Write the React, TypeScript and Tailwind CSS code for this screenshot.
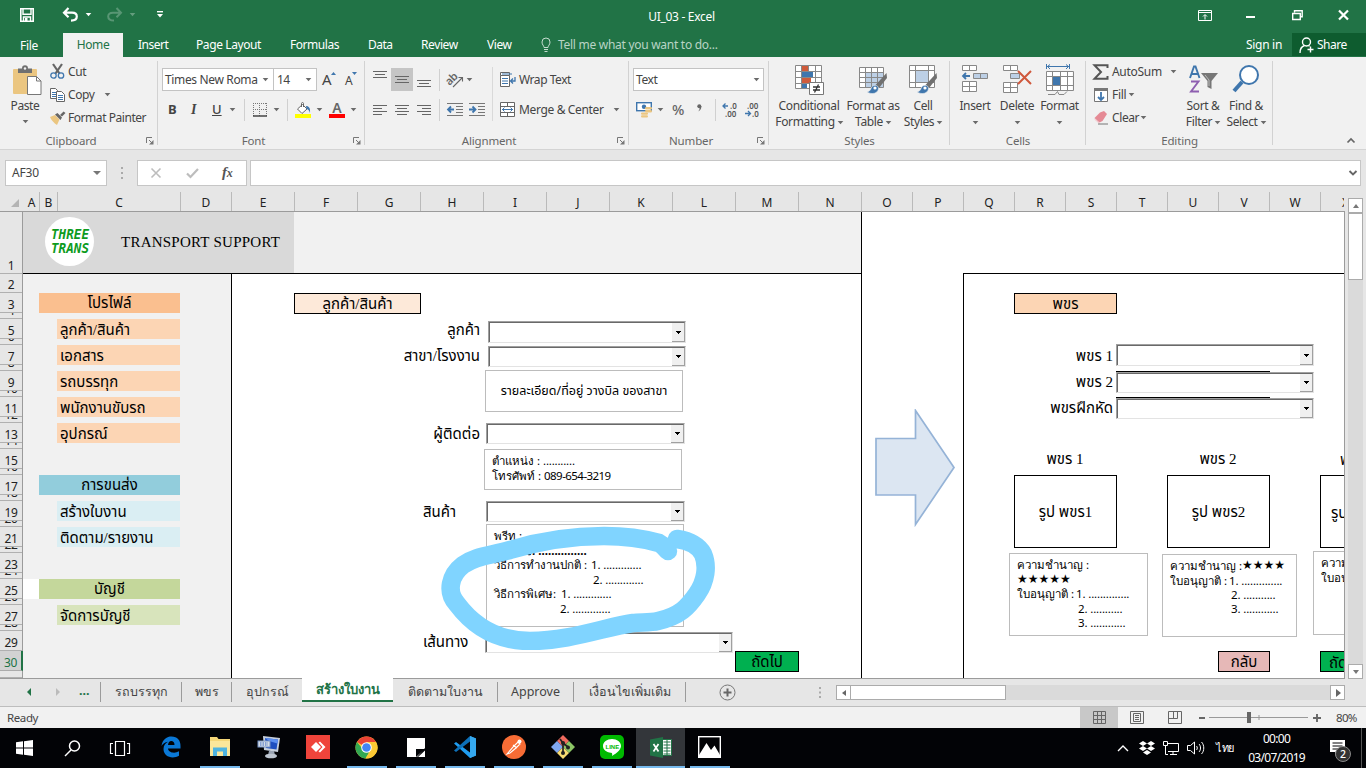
import React from "react";

const B = "#3f76ad";

function Svg({ w, h, className = "", children }: { w: number; h: number; className?: string; children: React.ReactNode }) {
  return (
    <svg width={w} height={h} viewBox={`0 0 ${w} ${h}`} fill="none" className={`block shrink-0 overflow-visible ${className}`}>
      {children}
    </svg>
  );
}

function Caret({ className = "text-[#6a6a6a]" }: { className?: string }) {
  return (
    <Svg w={5} h={3} className={className}>
      <path d="M-.3 0h5.600L2.500 3.300z" fill="currentColor" />
    </Svg>
  );
}

function Launcher() {
  return (
    <Svg w={8} h={8}>
      <path d="M.5 6V.5H6M3 3l3 3" stroke="#777" />
      <path d="M7.500 3v4.500H3z" fill="#777" />
    </Svg>
  );
}

function Lines({ rows }: { rows: [number, number, number][] }) {
  return (
    <Svg w={16} h={14}>
      {rows.map(([x, y, w], i) => (
        <rect key={i} x={x} y={y} width={w} height={1} fill="#666" />
      ))}
    </Svg>
  );
}

/* ---------- title bar ---------- */

function TitleBar() {
  return (
    <div className="relative flex h-[33px] items-center text-white">
      <div className="flex w-[236px] items-center">
        <Svg w={14} h={14} className="ml-5 mb-1">
          <path d="M.8.8h12.400v12.400H.8z" stroke="#fff" strokeWidth="1.600" />
          <path d="M3 1v5.300h8V1M3.500 13V9h7v4" stroke="#fff" strokeWidth="1.400" />
          <rect x="5" y="10" width="2.500" height="3" fill="#fff" />
        </Svg>
        <Svg w={15} h={14} className="ml-[29px] mb-1">
          <path d="M5.500 0L1 4.700l4.500 4.500M1.500 4.700h7.500c3.300 0 4.800 1.500 4.800 3.800S12 12.600 8 12.600" stroke="#fff" strokeWidth="2.200" />
        </Svg>
        <Caret className="ml-[8px] mb-1 text-white" />
        <Svg w={15} h={14} className="ml-4 mb-1 opacity-25">
          <path d="M9.500 0L14 4.700 9.500 9.200M13.500 4.700H6C2.700 4.700 1.200 6.200 1.200 8.500s1.800 4.100 5.800 4.100" stroke="#fff" strokeWidth="2" />
        </Svg>
        <Caret className="ml-[8px] mb-1 text-white/30" />
        <Svg w={6} h={7} className="ml-[22px] mb-1">
          <path d="M0 .7h6" stroke="#fff" strokeWidth="1.400" />
          <path d="M0 3h6L3 6.500z" fill="#fff" />
        </Svg>
      </div>
      <div className="flex-1 pr-[73px] text-center text-[12px] tracking-[-0.3px]"><span className="pl-[2px]">UI_03 - Excel</span></div>
      <div className="mr-[17px] mb-[3px] flex items-center">
        <Svg w={14} h={11}>
          <path d="M.5.500h13v10H.5zM.5 2.500h13M7 9.500V5M5 6.500l2-2 2 2" stroke="#fff" />
        </Svg>
        <Svg w={9} h={2} className="mt-1 ml-[34px]"><rect width="9" height="2" fill="#fff" /></Svg>
        <Svg w={11} h={10} className="ml-[37px]">
          <path d="M2.500 2.500V.7h7.700v6H8.500M.7 3.500h7.600v6H.7z" stroke="#fff" strokeWidth="1.400" />
        </Svg>
        <Svg w={11} h={10} className="ml-[35px]"><path d="M1 .5l9 9M10 .5l-9 9" stroke="#fff" strokeWidth="2.200" /></Svg>
      </div>
    </div>
  );
}

function RibbonTabs() {
  return (
    <div className="flex h-6 text-[12px] leading-6 text-white">
      <div className="w-[63px] pl-5 pt-px tracking-[-0.3px]">File</div>
      <div className="w-[60px] bg-[#f1f1f1] text-center tracking-[-0.4px] text-[#217346]">Home</div>
      <div className="w-[58px] pl-[15px] tracking-[-0.5px]">Insert</div>
      <div className="w-[94px] pl-[15px] tracking-[-0.4px]">Page Layout</div>
      <div className="w-[78px] pl-[15px] tracking-[-0.45px]">Formulas</div>
      <div className="w-[53px] pl-[15px] tracking-[-0.5px]">Data</div>
      <div className="w-[66px] pl-[15px] tracking-[-0.4px]">Review</div>
      <div className="w-[54px] pl-[15px] tracking-[-0.4px]">View</div>
      <Svg w={10} h={15} className="ml-[15px] mt-1">
        <path d="M3 10.500c0-2-2-2.500-2-5.500a4 4 0 018 0c0 3-2 3.500-2 5.500zM3 12.500h4M3.500 14.500h3" stroke="#c5dccf" />
      </Svg>
      <div className="pl-[7px] tracking-[-0.28px] text-[#b9d4c5]">Tell me what you want to do...</div>
      <div className="flex-1" />
      <div className="w-[46px] tracking-[-0.3px]">Sign in</div>
      <div className="flex h-[23px] w-[74px] items-center bg-[#0e5c2f] pl-[7px]">
        <Svg w={16} h={16}>
          <circle cx="7.500" cy="5" r="4" stroke="#fff" strokeWidth="1.400" />
          <path d="M1 16c0-4 1.500-6.500 4.500-7.500M9.500 8.500l1 .7M11.500 9.500v6M8.500 12.500h6" stroke="#fff" strokeWidth="1.400" />
        </Svg>
        <span className="ml-[2px] tracking-[-0.5px]">Share</span>
      </div>
    </div>
  );
}

/* ---------- ribbon ---------- */

function Group({ w, label, launcher, children }: { w: string; label: string; launcher?: boolean; children: React.ReactNode }) {
  return (
    <div className={`relative flex flex-col ${w}`}>
      <div className="h-[75px]">{children}</div>
      <div className="flex h-[17px] items-center text-[11.5px] leading-none text-[#666]">
        <div className="flex-1 text-center tracking-[-0.15px]">{label}</div>
        {launcher && <div className="w-[16px] pl-1 pt-px"><Launcher /></div>}
      </div>
      <div className="absolute right-0 top-1 h-[84px] w-px bg-[#d2d2d2]" />
    </div>
  );
}

function PasteIcon() {
  return (
    <Svg w={29} h={31}>
      <rect x="0" y="4" width="24" height="25" rx="1" fill="#ebc681" />
      <path d="M5 8V3.500h4C9 1 10 .3 12 .3S15 1 15 3.500h4V8z" fill="#707070" />
      <circle cx="12" cy="3.500" r="1.200" fill="#f1f1f1" />
      <path d="M14.500 11.500h9l4.500 4.500v13.500H14.500z" fill="#fff" stroke="#777" />
      <path d="M23.500 11.500V16H28" stroke="#777" />
    </Svg>
  );
}

function Clipboard() {
  return (
    <Group w="w-[158px]" label="Clipboard" launcher>
      <div className="flex text-[12px] text-[#444]">
        <div className="flex w-[50px] flex-col items-center pt-[8px]">
          <div className="pl-1"><PasteIcon /></div>
          <div className="mt-[2px] leading-4 tracking-[-0.4px]">Paste</div>
          <div className="mt-[6px]"><Caret /></div>
        </div>
        <div className="flex flex-col pt-[3px] tracking-[-0.4px]">
          <div className="flex h-[23px] items-center">
            <Svg w={15} h={15}>
              <path d="M3 0l6.500 9.500M12 0L5.500 9.500" stroke="#666" strokeWidth="2.200" />
              <circle cx="3.500" cy="11.500" r="2.700" stroke={B} strokeWidth="1.300" />
              <circle cx="11" cy="11.500" r="2.700" stroke={B} strokeWidth="1.300" />
            </Svg>
            <span className="ml-[3px]">Cut</span>
          </div>
          <div className="flex h-[23px] items-center">
            <Svg w={15} h={14}>
              <path d="M.5.500h5l2 2v8h-7z" fill="#fff" stroke="#666" />
              <path d="M2 4.500h4M2 6.500h4M2 8.500h4" stroke={B} />
              <path d="M6.500 3.500h5l3 3v7h-8z" fill="#fff" stroke="#666" />
              <path d="M8 7.500h5M8 9.500h5M8 11.500h5" stroke={B} />
            </Svg>
            <span className="ml-[3px]">Copy</span>
            <div className="ml-[10px]"><Caret /></div>
          </div>
          <div className="flex h-[23px] items-center">
            <Svg w={16} h={14}>
              <path d="M0 6l5-2 4.500 4.500L7 14C4 12 1.500 9.500 0 6z" fill="#ebc681" />
              <path d="M5 3.500L7.500 2 12 6.500 10.500 9zM10 4l3.500-3.500L15.500 2 12 5.500z" fill="#666" />
            </Svg>
            <span className="ml-[2px] whitespace-nowrap tracking-[-0.45px]">Format Painter</span>
          </div>
        </div>
      </div>
    </Group>
  );
}

function FontGroup() {
  return (
    <Group w="w-[207px]" label="Font" launcher>
      <div className="flex flex-col pt-[11px] pl-1 text-[#444]">
        <div className="flex h-[23px] items-stretch text-[12px]">
          <div className="flex w-[112px] items-center justify-between border border-[#c3c3c3] bg-white pl-[2px] pr-[5px]">
            <span className="whitespace-nowrap tracking-[-0.35px]">Times New Roma</span><Caret />
          </div>
          <div className="-ml-px flex w-[44px] items-center justify-between border border-[#c3c3c3] bg-white pl-[3px] pr-[5px]">
            <span className="tracking-[-0.7px]">14</span><Caret />
          </div>
          <div className="ml-[5px] flex w-[15px] items-center text-[15px]">A<Svg w={5} h={3} className="-ml-px mb-3"><path d="M2.500 0L5 3H0z" fill={B} /></Svg></div>
          <div className="ml-2 flex items-center text-[12px]"><span className="pt-[2px]">A</span><Svg w={5} h={3} className="-ml-px mb-3"><path d="M2.500 3L5 0H0z" fill={B} /></Svg></div>
        </div>
        <div className="mt-[7px] flex h-[23px] items-center text-[13px]">
          <span className="w-[22px] pl-[6px] font-bold">B</span>
          <span className="w-[22px] pl-[7px] font-['Liberation_Serif'] text-[14px] italic font-bold">I</span>
          <span className="w-[24px] pl-[6px] font-medium underline">U</span>
          <Caret />
          <div className="ml-[9px] h-[22px] w-px bg-[#d0d0d0]" />
          <Svg w={14} h={14} className="ml-2">
            <path d="M.5 0v13M13.500 0v13M6.500 0v13M0 .5h14M0 6.500h14" stroke="#777" strokeDasharray="1 1" />
            <path d="M0 13h14" stroke="#444" strokeWidth="1.500" />
          </Svg>
          <div className="ml-[7px]"><Caret /></div>
          <div className="ml-2 h-[22px] w-px bg-[#d0d0d0]" />
          <Svg w={17} h={16} className="ml-[7px]">
            <path d="M2.500 7l5-4.500L12 7l-5 4.500zM6.500 5V1.500c0-1.300 2-1.300 2 0V5" stroke="#666" fill="#fff" />
            <path d="M11 4c3 0 4.500 2 4 7-1-3-2-4-3.500-4z" fill={B} />
            <rect y="12" width="16" height="4" fill="#ffff00" />
          </Svg>
          <div className="ml-[5px]"><Caret /></div>
          <div className="ml-[7px] flex w-4 flex-col items-center">
            <span className="h-[13px] text-[14px] leading-[13px] font-semibold text-[#666]">A</span>
            <span className="h-[4px] w-4 bg-[#ff0000]" />
          </div>
          <div className="ml-[6px]"><Caret /></div>
        </div>
      </div>
    </Group>
  );
}

function IndentIcon({ right }: { right?: boolean }) {
  return (
    <Svg w={16} h={14}>
      <path d="M0 .5h16M9 3.500h7M9 6.500h7M9 9.500h7M0 12.500h16" stroke="#777" />
      <path d={right ? "M0 6.500h6M3.500 3.500l3 3-3 3" : "M1 6.500h6M4 3.500l-3 3 3 3"} stroke={B} strokeWidth="1.800" />
    </Svg>
  );
}

function Alignment() {
  return (
    <Group w="w-[264px]" label="Alignment" launcher>
      <div className="flex pt-[10px]">
        <div className="flex w-[128px] flex-col border-r border-[#d9d9d9] pl-[3px] pt-px">
          <div className="flex h-[23px] items-center">
            <div className="w-[22px] pl-[5px] pb-[6px]"><Lines rows={[[0, 1, 14], [2, 4, 10], [0, 7, 14]]} /></div>
            <div className="ml-[1px] flex h-[23px] w-[22px] items-center justify-center bg-[#c5c5c5]"><Lines rows={[[1, 3, 14], [3, 6, 10], [1, 9, 14]]} /></div>
            <div className="ml-[4px] pt-1"><Lines rows={[[0, 5, 14], [2, 8, 10], [0, 11, 14]]} /></div>
            <div className="ml-[6px] h-[22px] w-px bg-[#d0d0d0]" />
            <Svg w={17} h={16} className="ml-[7px]">
              <text x="0" y="10" transform="rotate(-45 6 9)" fontSize="11" fontFamily="Noto Sans" fontWeight="600" letterSpacing="-.5" fill="#666">ab</text>
              <path d="M6 15l9-9M11.500 5.500h4v4" stroke="#666" strokeWidth="1.100" />
            </Svg>
            <div className="ml-[3px]"><Caret /></div>
          </div>
          <div className="mt-[7px] flex h-[23px] items-center">
            <div className="w-[22px] pl-[5px]"><Lines rows={[[0, 2, 14], [0, 5, 9], [0, 8, 14], [0, 11, 9]]} /></div>
            <div className="w-[22px] pl-[5px]"><Lines rows={[[0, 2, 14], [2, 5, 10], [0, 8, 14], [2, 11, 10]]} /></div>
            <div className="w-[22px] pl-[5px]"><Lines rows={[[0, 2, 14], [5, 5, 9], [0, 8, 14], [5, 11, 9]]} /></div>
            <div className="ml-[5px] h-[22px] w-px bg-[#d0d0d0]" />
            <div className="ml-[7px]"><IndentIcon /></div>
            <div className="ml-[6px]"><IndentIcon right /></div>
          </div>
        </div>
        <div className="flex flex-col pl-[7px] pt-px text-[12px] text-[#444]">
          <div className="flex h-[23px] items-center">
            <Svg w={16} h={16}>
              <path d="M.5.500h9v3h-9zM.5 3.500v11h9v-11" stroke="#666" fill="#fff" />
              <path d="M2 2h10M2 6.500h6M2 9h6M2 11.500h6" stroke={B} />
              <path d="M15 5v4h-4M13 6.500L10.500 9l2.500 2.500" stroke={B} strokeWidth="1.300" />
            </Svg>
            <span className="ml-[3px] tracking-[-0.45px]">Wrap Text</span>
          </div>
          <div className="mt-[7px] flex h-[23px] items-center">
            <Svg w={16} h={15}>
              <path d="M.5.500h14v14H.5zM.5 4.500h14M.5 10.500h14M7.500.5v4M7.500 10.500v4" stroke="#666" fill="#fff" />
              <path d="M2 7.500h11M4.500 5.500l-2 2 2 2M10.500 5.500l2 2-2 2" stroke={B} />
            </Svg>
            <span className="ml-[3px] whitespace-nowrap tracking-[-0.35px]">Merge &amp; Center</span>
            <div className="ml-[10px]"><Caret /></div>
          </div>
        </div>
      </div>
    </Group>
  );
}

function NumberGroup() {
  return (
    <Group w="w-[140px]" label="Number" launcher>
      <div className="flex flex-col pl-1 pt-[11px] text-[12px] text-[#444]">
        <div className="flex h-[23px] w-[131px] items-center justify-between border border-[#c3c3c3] bg-white pl-[2px] pr-[4px]">
          <span className="tracking-[-0.4px]">Text</span><Caret />
        </div>
        <div className="mt-[7px] flex h-[23px] items-center">
          <Svg w={17} h={16} className="ml-[3px]">
            <rect x=".7" y=".7" width="14.600" height="8" fill="#fff" stroke={B} strokeWidth="1.400" />
            <circle cx="8" cy="4.700" r="2.200" fill={B} />
            <rect x="9" y="5" width="7" height="2.500" rx="1.200" fill="#ebc681" />
            <rect x="9" y="8" width="7" height="2.500" rx="1.200" fill="#ebc681" />
            <rect x="5" y="10.500" width="7" height="2.300" rx="1.100" fill="#ebc681" />
            <rect x="5" y="13.300" width="7" height="2.300" rx="1.100" fill="#ebc681" />
          </Svg>
          <div className="ml-[5px]"><Caret /></div>
          <span className="ml-[9px] w-[14px] text-[14.5px] font-medium text-[#666]">%</span>
          <Svg w={5} h={8} className="ml-[11px] mb-1">
            <circle cx="2.300" cy="2.300" r="2" fill="#666" /><path d="M4.300 2c.3 2.500-.8 4.500-3.300 5.500C2.500 6 2.800 5 2.500 3z" fill="#666" />
          </Svg>
          <div className="ml-[13px] h-[22px] w-px bg-[#d0d0d0]" />
          <Svg w={15} h={15} className="ml-[7px]">
            <path d="M0 4h5M2.500 1.500L0 4l2.500 2.500" stroke={B} strokeWidth="1.300" />
            <text x="7" y="7" fontSize="8" fontFamily="Noto Sans" fontWeight="600" fill="#555">.0</text>
            <text x="2" y="14.500" fontSize="8" fontFamily="Noto Sans" fontWeight="600" fill="#555">.00</text>
          </Svg>
          <Svg w={15} h={15} className="ml-[7px]">
            <path d="M0 11.500h5M3 9l2.500 2.500L3 14" stroke={B} strokeWidth="1.300" />
            <text x="2" y="7" fontSize="8" fontFamily="Noto Sans" fontWeight="600" fill="#555">.00</text>
            <text x="7" y="14.500" fontSize="8" fontFamily="Noto Sans" fontWeight="600" fill="#555">.0</text>
          </Svg>
        </div>
      </div>
    </Group>
  );
}

function Big({ w, icon, a, b, ml = "" }: { w: string; icon: React.ReactNode; a: string; b?: string; ml?: string }) {
  return (
    <div className={`flex flex-col items-center pt-[7px] text-[12px] leading-4 text-[#444] ${w} ${ml}`}>
      <div className="flex h-[32px] items-start">{icon}</div>
      <div className="mt-[2px] whitespace-nowrap tracking-[-0.35px]">{a}</div>
      <div className="flex h-4 items-center gap-[3px] tracking-[-0.35px]">{b && <span>{b}</span>}<Caret /></div>
    </div>
  );
}

function Brush() {
  return (
    <>
      <path d="M28.500 9L17.500 21l3.500 3L29 14z" fill="#707070" />
      <path d="M20.500 24.500c0-4-6-4.500-7.500 0-.5 2-2 3-4 3.500 5 3 11 1.500 11.500-3.500z" fill={B} stroke="#f1f1f1" strokeWidth=".6" />
      <circle cx="17" cy="24" r="1.600" fill="#fff" />
    </>
  );
}

function Styles() {
  return (
    <Group w="w-[181px]" label="Styles">
      <div className="flex">
        <Big w="w-[74px]" ml="ml-[3px]" a="Conditional" b="Formatting" icon={
          <Svg w={31} h={32}>
            <path d="M1.500 1.500h26v23h-26z" fill="#fff" />
            <rect x="8" y="1" width="6" height="7" fill="#cf5b3b" /><rect x="8" y="8" width="11" height="6" fill={B} />
            <rect x="8" y="14" width="9" height="5" fill="#cf5b3b" /><rect x="8" y="19" width="5" height="6" fill={B} />
            <path d="M1.500 1.500h26v23h-26zM7.500 1v24M21.500 1v24M14.500 1v7M1 7.500h27M1 13.500h27M1 19.500h27" stroke="#888" />
            <path d="M15.500 18.500h14v12h-14z" fill="#fff" stroke="#777" />
            <path d="M19 23h7M19 26h7M24.500 20.500l-4 8" stroke="#333" strokeWidth="1.300" />
          </Svg>} />
        <Big w="w-[54px]" a="Format as" b="Table" icon={
          <Svg w={30} h={32}>
            <path d="M1.500 3.500h24v20h-24z" fill="#fff" /><path d="M8 8h17v15H8z" fill="#bdd0e6" />
            <path d="M1.500 3.500h24v20h-24zM7.500 3v20M13.500 3v20M19.500 3v20M1 8.500h24M1 13.500h24M1 18.500h24" stroke="#888" />
            <Brush />
          </Svg>} />
        <Big w="w-[46px]" a="Cell" b="Styles" icon={
          <Svg w={30} h={32}>
            <path d="M1.500 1.500h25v22h-25z" fill="#fff" /><path d="M8 7h13v11H8z" fill="#bdd0e6" />
            <path d="M1.500 1.500h25v22h-25zM7.500 1v22M20.500 1v22M1 6.500h25M1 18.500h25" stroke="#888" />
            <Brush />
          </Svg>} />
      </div>
    </Group>
  );
}

function Cells() {
  return (
    <Group w="w-[136px]" label="Cells">
      <div className="flex">
        <Big w="w-[42px]" ml="ml-[4px]" a="Insert" icon={
          <Svg w={28} h={32}>
            <path d="M1.500 1.500h14v5h-14zM8.500 1.500v5M1.500 17.500h14v10h-14zM1.500 22.500h14M8.500 17.500v10" fill="#fff" stroke="#888" />
            <path d="M12.500 9.500h14v5h-14zM19.500 9.500v5" fill="#bdd0e6" stroke="#888" />
            <path d="M2 12h7M5 9l-3 3 3 3" stroke={B} strokeWidth="1.800" />
          </Svg>} />
        <Big w="w-[42px]" a="Delete" icon={
          <Svg w={30} h={32}>
            <path d="M1.500 1.500h14v5h-14zM8.500 1.500v5M1.500 18.500h14v10h-14zM1.500 23.500h14M8.500 18.500v10" fill="#fff" stroke="#888" />
            <path d="M8.500 9.500h9v5h-9z" fill="#bdd0e6" stroke="#888" />
            <path d="M16 7l13 13M29 7L16 20" stroke="#d0583c" strokeWidth="2" />
          </Svg>} />
        <Big w="w-[43px]" a="Format" icon={
          <Svg w={30} h={32}>
            <path d="M1.500 0v5M24.500 0v5M2 2.500h22M5 .5l-2.500 2L5 5M21 .5l2.500 2L21 5" stroke={B} />
            <path d="M1.500 7.500h26v19h-26z" fill="#fff" /><rect x="8" y="12" width="8" height="10" fill={B} />
            <path d="M1.500 7.500h27v19h-27zM7.500 7v19M15.500 7v19M22.500 7v19M1 12.500h27M1 21.500h27M3 30.500h7l2.500-3 1.500 3h5l3-3" stroke="#888" />
          </Svg>} />
      </div>
    </Group>
  );
}

function Editing() {
  return (
    <Group w="w-[187px]" label="Editing">
      <div className="flex">
        <div className="ml-[7px] flex w-[88px] flex-col pt-[3px] text-[12px] tracking-[-0.3px] text-[#444]">
          <div className="flex h-[23px] items-center">
            <Svg w={16} h={16}><path d="M14.500 4V1.200H1.500L8 8l-6.500 6.800h13V12" stroke="#555" strokeWidth="2" /></Svg>
            <span className="ml-[3px]">AutoSum</span><div className="ml-[9px]"><Caret /></div>
          </div>
          <div className="flex h-[23px] items-center">
            <Svg w={16} h={16}>
              <path d="M1.500 1.500h13v13h-13z" fill="#fff" stroke="#777" /><rect x="1" y="1" width="14" height="3" fill="#777" />
              <path d="M8 5v8M5 10l3 3 3-3" stroke={B} strokeWidth="1.800" />
            </Svg>
            <span className="ml-[3px]">Fill</span><div className="ml-[3px]"><Caret /></div>
          </div>
          <div className="flex h-[23px] items-center">
            <Svg w={16} h={14}>
              <path d="M7 1.500l4-1.500 3 3-4.500 7-3 1.500-5-4.500z" fill="#e58a95" /><path d="M1.500 8l5 4.500" stroke="#f5c1c7" /><path d="M5 13h10" stroke="#777" />
            </Svg>
            <span className="ml-[3px] tracking-[-0.4px]">Clear</span><div className="ml-[2px]"><Caret /></div>
          </div>
        </div>
        <Big w="w-[44px]" a="Sort &" b="Filter" icon={
          <Svg w={30} h={32}>
            <path d="M2 14L6 2.500h1.500L11.500 14M3.500 10h6.500" stroke={B} strokeWidth="1.900" />
            <path d="M3 17.500h7.500L3 27.500h8" stroke="#8e5fb0" strokeWidth="1.900" />
            <path d="M13 9h17l-6.500 8v8l-4-2v-6z" fill="#777" />
            <path d="M17 11l4 5v6" stroke="#bbb" />
          </Svg>} />
        <Big w="w-[42px]" a="Find &" b="Select" icon={
          <Svg w={30} h={32}>
            <circle cx="18" cy="11" r="9" fill="#fff" stroke={B} strokeWidth="2" />
            <path d="M11 18L3 27" stroke={B} strokeWidth="4" />
          </Svg>} />
      </div>
    </Group>
  );
}

function Ribbon() {
  return (
    <div className="flex h-[93px] border-b border-[#d4d4d4] bg-[#f1f1f1]">
      <Clipboard />
      <FontGroup />
      <Alignment />
      <NumberGroup />
      <Styles />
      <Cells />
      <Editing />
      <div className="flex flex-1 items-end justify-end pb-[6px] pr-[11px]">
        <Svg w={8} h={5}><path d="M.5 4.500L4 1l3.500 3.500" stroke="#666" strokeWidth="1.700" /></Svg>
      </div>
    </div>
  );
}

function FormulaBar() {
  return (
    <div className="flex h-[42px] items-start bg-[#e6e6e6] pt-[10px]">
      <div className="ml-[5px] flex h-[26px] w-[102px] items-center justify-between border border-[#c6c6c6] bg-white pl-[6px] pr-[5px] text-[12px] text-[#444]">
        <span className="tracking-[-0.2px]">AF30</span>
        <Svg w={8} h={4}><path d="M0 0h8L4 4z" fill="#777" /></Svg>
      </div>
      <Svg w={2} h={12} className="ml-[14px] mt-[7px]"><path d="M1 0v2M1 5v2M1 10v2" stroke="#aaa" strokeWidth="2" /></Svg>
      <div className="ml-[14px] flex h-[26px] w-[110px] items-center border border-[#c6c6c6] bg-white">
        <Svg w={10} h={10} className="ml-[13px]"><path d="M.5.500l9 9M9.500.5l-9 9" stroke="#bdbdbd" strokeWidth="1.600" /></Svg>
        <Svg w={13} h={10} className="ml-[25px]"><path d="M1 5.500L4.500 9 12 1" stroke="#bdbdbd" strokeWidth="2.200" /></Svg>
        <span className="ml-[23px] pb-[2px] font-['Liberation_Serif'] text-[15px] font-bold italic tracking-[-0.3px] text-[#555]">f<span className="text-[12px]">x</span></span>
      </div>
      <div className="ml-[3px] flex h-[26px] w-[1111px] items-center justify-end border border-[#c6c6c6] bg-white pr-[3px]">
        <Svg w={8} h={6}><path d="M.5 1L4 4.500 7.500 1" stroke="#666" strokeWidth="1.900" /></Svg>
      </div>
    </div>
  );
}

/* ---------- worksheet ---------- */

const columns = "ABCDEFGHIJKLMNOPQRSTUVWX".split("");

function ColumnHeaders() {
  return (
    <div className="flex h-5 border-b border-[#9b9b9b] bg-[#e6e6e6]">
      <div className="flex w-[24px] items-end justify-end pb-1 pr-[5px]">
        <Svg w={8} h={8}><path d="M8 0v8H0z" fill="#b4b4b4" /></Svg>
      </div>
      <div className="grid w-[1320px] grid-cols-[16px_18px_123px_51px_repeat(10,63px)_repeat(9,51px)_23px] overflow-hidden text-center text-[12px] leading-[22px] text-[#222]">
        {columns.map((c, i) => (
          <div key={c} className={i === 23 ? "overflow-hidden pl-[21px] text-left" : "border-r border-[#bababa]"}>{c}</div>
        ))}
      </div>
    </div>
  );
}

const rows = Array.from({ length: 31 }, (_, i) => i + 1);

function RowHeaders() {
  return (
    <div className="grid w-[23px] shrink-0 grid-rows-[62px_19px_20px_repeat(13,6px_20px)_20px_7px] border-r border-[#9b9b9b] bg-[#e6e6e6] text-center text-[12px] tracking-[-0.4px] text-[#222]">
      {rows.map((n) => (
        <div key={n} className={`flex items-end justify-center overflow-hidden border-b ${n === 30 ? "-mr-px border-b-[#ababab] border-r-2 border-r-[#217346] bg-[#d2d2d2] text-[#217346]" : "border-[#b0b0b0]"}`}>
          {n < 31 && <span className="h-[15px] leading-[15px]">{n}</span>}
        </div>
      ))}
    </div>
  );
}

function Label({ at, children }: { at: string; children: React.ReactNode }) {
  return (
    <div className={`flex items-center whitespace-nowrap ${at}`}>
      <span className={at.includes("justify-center") ? "" : "mt-[2px]"}>{children}</span>
    </div>
  );
}

function Combo({ at }: { at: string }) {
  return (
    <div className={`absolute flex justify-end border border-b-[#e3e3e3] border-l-[#a0a0a0] border-r-[#e3e3e3] border-t-[#a0a0a0] bg-white ${at}`}>
      <div className="flex-1 border-l border-t border-[#696969]" />
      <div className="flex w-[13px] items-center justify-center border-b border-r border-t border-b-[#a0a0a0] border-r-[#a0a0a0] border-t-[#696969] bg-[#f0f0f0]">
        <Svg w={5} h={3}><path d="M0 0h5v1H4v1H3v1H2V2H1V1H0z" fill="#000" /></Svg>
      </div>
    </div>
  );
}

function TextBox({ at, children }: { at: string; children: React.ReactNode }) {
  return <div className={`absolute border border-[#bcbcbc] bg-white leading-[15px] whitespace-pre ${at}`}>{children}</div>;
}

function Logo() {
  return (
    <div className="ml-[6px] flex h-[49px] w-[49px] flex-col items-center justify-center rounded-full bg-white">
      <svg width="42" height="32" viewBox="0 0 42 32" className="block">
        <g fill="#0d9b1e" fontFamily="DejaVu Sans Mono" fontWeight="bold" fontStyle="oblique" fontSize="14.500">
          <text x="2" y="13" textLength="38" lengthAdjust="spacingAndGlyphs">THREE</text>
          <text x="2" y="27" textLength="38" lengthAdjust="spacingAndGlyphs">TRANS</text>
        </g>
      </svg>
    </div>
  );
}

function Sheet() {
  return (
    <div className="relative grid h-[466px] w-[1321px] grid-cols-[16px_18px_123px_51px_repeat(10,63px)_repeat(9,51px)_24px] grid-rows-[62px_19px_20px_repeat(13,6px_20px)_20px_7px] overflow-hidden bg-white font-['Liberation_Serif','Noto_Sans_Thai','Noto_Sans',serif] text-[15px] leading-[20px] text-black">
      <div className="col-start-1 col-end-6 row-start-1 flex items-center border-b border-black bg-[#d9d9d9]">
        <div className="w-[98px] pb-[2px] pl-4"><Logo /></div>
        <span className="whitespace-nowrap pb-px text-[15px] tracking-[0.24px]">TRANSPORT SUPPORT</span>
      </div>
      <div className="col-start-6 col-end-15 row-start-1 border-b border-black bg-[#f1f1f1]" />
      <div className="col-start-1 col-end-5 row-start-2 row-end-32 bg-[#f1f1f1]" />
      <div className="col-start-5 col-end-15 row-start-2 row-end-32 border-l border-black" />
      <div className="col-start-15 col-end-17 row-start-1 row-end-32 border-l border-black" />
      <div className="col-start-17 col-end-25 row-start-2 row-end-32 -mt-px border-l border-t border-black" />
      <div className="col-start-1 row-start-25 bg-white" />

      <Label at="col-start-2 col-end-4 row-start-3 bg-[#fabf8f] justify-center">โปรไฟล์</Label>
      <Label at="col-start-3 row-start-5 bg-[#fcd5b4] pl-[3px]">ลูกค้า/สินค้า</Label>
      <Label at="col-start-3 row-start-7 bg-[#fcd5b4] pl-[3px]">เอกสาร</Label>
      <Label at="col-start-3 row-start-9 bg-[#fcd5b4] pl-[3px]">รถบรรทุก</Label>
      <Label at="col-start-3 row-start-11 bg-[#fcd5b4] pl-[3px]">พนักงานขับรถ</Label>
      <Label at="col-start-3 row-start-13 bg-[#fcd5b4] pl-[3px]">อุปกรณ์</Label>
      <Label at="col-start-2 col-end-4 row-start-17 bg-[#92cddc] justify-center">การขนส่ง</Label>
      <Label at="col-start-3 row-start-19 bg-[#daeef3] pl-[3px]">สร้างใบงาน</Label>
      <Label at="col-start-3 row-start-21 bg-[#daeef3] pl-[3px]">ติดตาม/รายงาน</Label>
      <Label at="col-start-2 col-end-4 row-start-25 bg-[#c4d79b] justify-center">บัญชี</Label>
      <Label at="col-start-3 row-start-27 bg-[#d8e4bc] pl-[3px]">จัดการบัญชี</Label>

      <Label at="col-start-6 col-end-8 row-start-3 -mr-px -mb-px border border-black bg-[#fde9d9] justify-center">ลูกค้า/สินค้า</Label>
      <Label at="col-start-8 row-start-5 justify-end pr-[3px]">ลูกค้า</Label>
      <Label at="col-start-7 col-end-9 row-start-7 justify-end pr-[3px]">สาขา/โรงงาน</Label>
      <Label at="col-start-8 row-start-13 justify-end pr-[3px]">ผู้ติดต่อ</Label>
      <Label at="col-start-8 row-start-19 pl-[3px]">สินค้า</Label>
      <Label at="col-start-8 row-start-29 pl-[3px]">เส้นทาง</Label>
      <Label at="col-start-13 row-start-30 -mr-px -mb-px border border-black bg-[#00b050] justify-center">ถัดไป</Label>

      <Label at="col-start-18 col-end-20 row-start-3 -mr-px -mb-px border border-black bg-[#fcd5b4] justify-center">พขร</Label>
      <Label at="col-start-18 col-end-20 row-start-7 justify-end pr-[3px]">พขร 1</Label>
      <Label at="col-start-18 col-end-20 row-start-9 justify-end pr-[3px]">พขร 2</Label>
      <Label at="col-start-18 col-end-20 row-start-11 justify-end pr-[3px]">พขรฝึกหัด</Label>
      <div className="col-start-20 col-end-23 row-start-9 row-end-11 -mr-px -mb-px border-y border-black" />
      <Label at="col-start-18 col-end-20 row-start-15 justify-center">พขร 1</Label>
      <Label at="col-start-21 col-end-23 row-start-15 justify-center">พขร 2</Label>
      <Label at="col-start-24 row-start-15 pl-[20px]">พขร 3</Label>
      <Label at="col-start-18 col-end-20 row-start-17 row-end-22 -mr-px mb-[-1px] border border-black justify-center">รูป พขร1</Label>
      <Label at="col-start-21 col-end-23 row-start-17 row-end-22 -mr-px mb-[-1px] border border-black justify-center">รูป พขร2</Label>
      <Label at="col-start-24 row-start-17 row-end-22 -mr-20 mb-[-1px] border border-black pl-[10px]">รูป พขร3</Label>
      <Label at="col-start-22 row-start-30 -mr-px -mb-px border border-black bg-[#e6b8b7] justify-center">กลับ</Label>
      <Label at="col-start-24 row-start-30 -mr-20 -mb-px border border-black bg-[#00b050] pl-[8px]">ถัดไป</Label>

      {/* form controls and shapes floating above the cells */}
      <Combo at="left-[465px] top-[109px] h-[22px] w-[198px]" />
      <Combo at="left-[465px] top-[134px] h-[21px] w-[198px]" />
      <Combo at="left-[463px] top-[211px] h-[21px] w-[199px]" />
      <Combo at="left-[463px] top-[289px] h-[21px] w-[199px]" />
      <Combo at="left-[462px] top-[420px] h-[21px] w-[248px]" />
      <Combo at="left-[1093px] top-[132px] h-[22px] w-[198px]" />
      <Combo at="left-[1093px] top-[160px] h-[21px] w-[198px]" />
      <Combo at="left-[1093px] top-[186px] h-[21px] w-[198px]" />

      <TextBox at="left-[462px] top-[158px] h-[42px] w-[198px] flex items-center justify-center font-['Noto_Sans_Thai','Noto_Sans',sans-serif] text-[12.5px]">รายละเอียด/ที่อยู่ วางบิล ของสาขา</TextBox>
      <TextBox at="left-[461px] top-[237px] h-[41px] w-[198px] pl-[7px] pt-[3px] font-['Noto_Sans',sans-serif] text-[11.5px]">
        <div>ตำแหน่ง : <span className="tracking-[-0.2px]">...........</span></div>
        <div>โทรศัพท์ : <span className="tracking-[-0.55px]">089-654-3219</span></div>
      </TextBox>
      <TextBox at="left-[463px] top-[312px] h-[103px] w-[198px] pl-[7px] pt-[3px] font-['Noto_Sans',sans-serif] text-[11.5px]">
        <div className="h-[15px]">พรีท :</div>
        <div className="h-[14px] pl-[32px] font-bold leading-[16px]">ง. ...............</div>
        <div className="flex h-[15px]"><span className="w-[97px]">วิธีการทำงานปกติ :</span><span className="tracking-[-0.15px]">1. .............</span></div>
        <div className="h-[14px] pl-[99px] tracking-[-0.15px]">2. .............</div>
        <div className="flex h-[15px]"><span className="w-[67px]">วิธีการพิเศษ:</span><span className="tracking-[-0.15px]">1. .............</span></div>
        <div className="h-[15px] pl-[66px] tracking-[-0.15px]">2. .............</div>
      </TextBox>
      <TextBox at="left-[986px] top-[341px] h-[83px] w-[139px] pl-[7px] pt-[3px] font-['Noto_Sans',sans-serif] text-[11.5px]">
        <div className="h-[15px]">ความชำนาญ :</div>
        <div className="h-[14px] font-['DejaVu_Sans'] text-[12px]">★★★★★</div>
        <div className="flex h-[15px]"><span className="w-[59px]">ใบอนุญาติ :</span><span className="tracking-[-0.15px]">1. ..............</span></div>
        <div className="h-[14px] pl-[61px] tracking-[-0.15px]">2. ...........</div>
        <div className="h-[15px] pl-[61px] tracking-[-0.15px]">3. ............</div>
      </TextBox>
      <TextBox at="left-[1139px] top-[342px] h-[83px] w-[135px] pl-[7px] pt-[3px] font-['Noto_Sans',sans-serif] text-[11.5px]">
        <div className="flex h-[15px]"><span className="w-[72px]">ความชำนาญ :</span><span className="font-['DejaVu_Sans'] text-[12px]">★★★★</span></div>
        <div className="flex h-[14px]"><span className="w-[59px]">ใบอนุญาติ :</span><span className="tracking-[-0.15px]">1. ..............</span></div>
        <div className="h-[14px] pl-[61px] tracking-[-0.15px]">2. ...........</div>
        <div className="h-[15px] pl-[61px] tracking-[-0.15px]">3. ............</div>
      </TextBox>
      <TextBox at="left-[1290px] top-[339px] h-[84px] w-[135px] pl-[7px] pt-[3px] font-['Noto_Sans',sans-serif] text-[11.5px]">{"ความชำนาญ :\nใบอนุญาติ :"}</TextBox>

      <svg width="82" height="118" viewBox="0 0 82 118" className="absolute left-[851px] top-[197px]">
        <path d="M2 29.500h39.500V1.500L80 58.500 41.500 115.500v-29.500H2z" fill="#dce6f2" stroke="#95b3d7" strokeWidth="1.700" />
      </svg>
      <svg width="290" height="130" viewBox="435 520 290 130" className="absolute left-[412px] top-[308px]">
        <path d="M677 539C690 541 698 545 703 554C708 566 706 581 697 594C688 607 680 616 658 621C650 623 640 622 633 623C605 627 570 641 530 641C505 641 478 632 457 604C446 592 450 575 463 565C476 556 488 556 510 550C540 541 570 536 604 536C625 536 645 539 659 543C663 545 665 548 668 551" fill="none" stroke="#80d4ff" strokeWidth="18.500" strokeLinecap="round" strokeLinejoin="round" />
      </svg>
    </div>
  );
}

function Triangle({ d, fill }: { d: string; fill: string }) {
  return <Svg w={8} h={8}><path d={d} fill={fill} /></Svg>;
}

function Worksheet() {
  return (
    <div className="flex h-[487px] bg-[#e6e6e6]">
      <div className="w-[1345px] border-b border-[#9b9b9b]">
        <ColumnHeaders />
        <div className="flex border-r border-[#9b9b9b]"><RowHeaders /><Sheet /></div>
      </div>
      <div className="ml-[3px] flex w-[15px] flex-col bg-[#dadada]">
        <div className="h-[6px] bg-[#e6e6e6]" />
        <div className="flex h-[15px] items-center justify-center border border-[#ababab] bg-white"><Triangle d="M1 6l3-4 3 4z" fill="#777" /></div>
        <div className="h-[67px] border border-[#ababab] bg-white" />
        <div className="flex-1" />
        <div className="flex h-[15px] items-center justify-center border border-[#ababab] bg-white"><Triangle d="M1 2h6L4 6z" fill="#777" /></div>
      </div>
    </div>
  );
}

function SheetTab({ w, children }: { w: string; children: React.ReactNode }) {
  return <div className={`mt-[3px] flex h-5 items-center justify-center whitespace-nowrap border-r border-[#9b9b9b] ${w}`}><span>{children}</span></div>;
}

function SheetTabs() {
  return (
    <div className="flex h-[28px] border-b border-[#bdbdbd] bg-[#e6e6e6] text-[12.5px] text-[#444]">
      <div className="flex h-[26px] w-[101px] items-center">
        <div className="ml-[25px]"><Triangle d="M6 0v8L2 4z" fill="#217346" /></div>
        <div className="ml-5"><Triangle d="M3 0v8l4-4z" fill="#bbb" /></div>
        <span className="ml-[18px] pb-[2px] font-bold text-[#217346]">...</span>
      </div>
      <div className="-ml-px mt-[3px] h-5 w-px bg-[#9b9b9b]" />
      <SheetTab w="w-[81px]">รถบรรทุก</SheetTab>
      <SheetTab w="w-[50px]">พขร</SheetTab>
      <SheetTab w="w-[70px] border-r-0">อุปกรณ์</SheetTab>
      <div className="-mt-px flex h-[24px] w-[91px] items-center justify-center border-b-2 border-[#217346] bg-white pt-[2px] text-[13px] font-bold whitespace-nowrap text-[#217346]">สร้างใบงาน</div>
      <SheetTab w="w-[105px]">ติดตามใบงาน</SheetTab>
      <SheetTab w="w-[76px]">Approve</SheetTab>
      <SheetTab w="w-[112px]">เงื่อนไขเพิ่มเติม</SheetTab>
      <Svg w={17} h={17} className="ml-[33px] mt-[5px]">
        <circle cx="8.500" cy="8.500" r="7.500" stroke="#777" /><path d="M4.500 8.500h8M8.500 4.500v8" stroke="#666" strokeWidth="2" />
      </Svg>
      <Svg w={2} h={11} className="ml-[83px] mt-2"><path d="M1 0v2M1 4.500v2M1 9v2" stroke="#aaa" strokeWidth="2" /></Svg>
      <div className="ml-[15px] mt-[6px] flex h-[15px] w-[509px] bg-[#dadada]">
        <div className="flex w-[15px] items-center justify-center border border-[#ababab] bg-white"><Triangle d="M6 1v6L2 4z" fill="#666" /></div>
        <div className="-ml-px w-[156px] border border-[#ababab] bg-white" />
        <div className="flex-1" />
        <div className="flex w-[15px] items-center justify-center border border-[#ababab] bg-white"><Triangle d="M2 0v8l5-4z" fill="#666" /></div>
      </div>
    </div>
  );
}

function StatusBar() {
  return (
    <div className="flex h-[21px] items-center bg-[#f1f1f1] text-[11.5px] text-[#444]">
      <span className="ml-[7px] flex-1 tracking-[-0.4px]">Ready</span>
      <div className="flex h-[21px] w-[38px] items-center justify-center bg-[#c8c8c8]">
        <Svg w={13} h={13}><path d="M.5.500h12v12H.5zM4.500.5v12M8.500.5v12M.5 4.500h12M.5 8.500h12" stroke="#666" /></Svg>
      </div>
      <Svg w={14} h={13} className="ml-3"><path d="M.5.500h13v12H.5zM3.500 2.500h7v8h-7zM5 4.500h4M5 6.500h4M5 8.500h4" stroke="#666" /></Svg>
      <Svg w={14} h={13} className="ml-6"><path d="M.5.500h13v12H.5zM5.500.5v7M9.500.5v7M.5 7.500h9" stroke="#666" /></Svg>
      <Svg w={124} h={12} className="ml-[16px]">
        <path d="M1 6h6M115 6h8M119 2v8" stroke="#666" strokeWidth="1.900" />
        <path d="M11 5.500h99M61 3v5" stroke="#999" />
        <rect x="49" y="0" width="4" height="11" fill="#666" />
      </Svg>
      <span className="ml-[14px] w-[30px] tracking-[-0.7px]">80%</span>
    </div>
  );
}

/* ---------- taskbar ---------- */

function Task({ run, active, children }: { run?: boolean; active?: boolean; children: React.ReactNode }) {
  return (
    <div className={`flex w-[49px] flex-col items-center ${active ? "bg-[#33363a]" : ""}`}>
      <div className="flex h-[38px] items-center">{children}</div>
      {run && <div className={`h-[2px] bg-[#76b9ed] ${active ? "w-[49px]" : "w-10"}`} />}
    </div>
  );
}

function Taskbar() {
  return (
    <div className="flex h-10 bg-[#020306] text-white">
      <div className="flex w-[146px] items-center">
        <Svg w={17} h={16} className="ml-4">
          <path d="M0 2.300L7 1.300v6.300H0zM8 1.200L17 0v7.600H8zM0 8.500h7v6.300l-7-1zM8 8.500h9V16l-9-1.200z" fill="#fff" />
        </Svg>
        <Svg w={17} h={17} className="ml-[31px]"><circle cx="10.500" cy="6" r="5" stroke="#fff" strokeWidth="1.500" /><path d="M7 10L1 16" stroke="#fff" strokeWidth="1.500" /></Svg>
        <Svg w={20} h={15} className="ml-[29px]"><path d="M5.500.500h9v14h-9zM3 2.500H.5v10H3M17 2.500h2.500v10H17" stroke="#fff" strokeWidth="1.200" /></Svg>
      </div>
      <Task>
        <Svg w={20} h={22}>
          <path d="M.5 10C1.500 3 6 .5 10.500.500c6 0 9 4 9 9.500v2.500H7c.3 4 6.500 5.500 11 2.800v4.500C11 23.500 2.500 20.500 2.500 13c0-3.500 2-6 4.500-7.200C4 6.300 1.700 7.800.5 10zM7 9h6.500C13.500 6 12 5 10.300 5 8.500 5 7.300 6.500 7 9z" fill="#0a78d6" />
        </Svg>
      </Task>
      <Task run>
        <Svg w={22} h={20}>
          <path d="M1 0h7l1.500 2H21v17H1z" fill="#f5d778" /><path d="M1 4h20v15H1z" fill="#fbe79b" /><path d="M4 19v-8.500h14V19h-4v-4.500H8V19z" fill="#4fb4e0" />
        </Svg>
      </Task>
      <Task>
        <Svg w={24} h={24}>
          <path d="M6 1l17 2-2 14-14-2z" fill="#c6cfdc" /><path d="M8 3l13 1.500-1.500 10L9 13z" fill="#1e4fc0" /><path d="M8 3l13 1.500-.5 4L12 6z" fill="#5c8ff0" />
          <rect x="1" y="6" width="12" height="6" fill="#d5dce5" stroke="#7896c8" /><path d="M3 8h8M3 10h8" stroke="#3867c2" strokeDasharray="1.500 1" />
          <path d="M12 16h5l1 4h-7z" fill="#9aa4b3" /><ellipse cx="14" cy="21" rx="6" ry="2.300" fill="#bec6d1" />
        </Svg>
      </Task>
      <Task>
        <Svg w={24} h={24}>
          <rect width="24" height="24" fill="#ef443b" /><path d="M5 12l5-5 5 5-5 5z" fill="#fff" /><path d="M12.500 7.500L14 6.500l5.500 5.500-5.500 5.500-1.500-1 4-4.500z" fill="#fff" />
        </Svg>
      </Task>
      <Task run>
        <Svg w={23} h={23}>
          <circle cx="11.500" cy="11.500" r="11" fill="#fcc934" />
          <path d="M11.500 11.500L2 6A11 11 0 0121 6z" fill="#ea4335" /><path d="M11.500 11.500H6.500L2 6a11 11 0 008.500 16.500l4-7z" fill="#32a853" />
          <path d="M11.500 6h9.500a11 11 0 01-10.500 16.500L16 14z" fill="#fcc934" />
          <circle cx="11.500" cy="11.500" r="5.300" fill="#fff" /><circle cx="11.500" cy="11.500" r="4.300" fill="#4285f4" />
        </Svg>
      </Task>
      <Task run><Svg w={18} h={19}><path d="M0 0h18v10L10 19H0z" fill="#fff" /><path d="M9 19v-8h9z" fill="#020306" /><path d="M11 19l7-6.500V19z" fill="#fff" /></Svg></Task>
      <Task run>
        <Svg w={24} h={24}>
          <path d="M17 1l6 2.500v17L17 23 1 8.500 3 7l14 10.500z" fill="#1f9cf0" /><path d="M17 1L1 15.500 3 17 17 6.500z" fill="#0d70b8" /><path d="M17 1l6 2.500v17L17 23z" fill="#35a8ee" />
        </Svg>
      </Task>
      <Task run>
        <Svg w={24} h={24}><circle cx="12" cy="12" r="12" fill="#f76c35" /><path d="M5 19l7-8 4-4 2 2-4 4-6 5zM11 10l4 3" stroke="#fff" strokeWidth="1.100" /><circle cx="17.500" cy="6.500" r="2" fill="#fff" /></Svg>
      </Task>
      <Task run>
        <Svg w={24} h={24}>
          <path d="M12 0l6 6-6 6-6-6z" fill="#f06a5e" /><path d="M6 6l6 6-6 6-6-6z" fill="#7fa6ef" /><path d="M18 6l6 6-6 6-6-6z" fill="#8cc665" /><path d="M12 12l6 6-6 6-6-6z" fill="#f8dc72" />
          <path d="M9 4l3 4v10M12 8l5 4" stroke="#222" strokeWidth="1.700" /><circle cx="12" cy="8" r="2" fill="#222" /><circle cx="17" cy="12.500" r="2" fill="#222" /><circle cx="12" cy="18" r="2" fill="#222" />
        </Svg>
      </Task>
      <Task run>
        <Svg w={24} h={24}>
          <rect width="24" height="24" rx="5" fill="#00b900" /><path d="M12 4c5 0 9 3 9 7 0 3.500-4 7-9 10 .5-2 .3-3-1-3.200C6 17 3 14.500 3 11c0-4 4-7 9-7z" fill="#fff" />
          <text x="5.500" y="13.500" fontSize="6" fontFamily="Liberation Sans" fontWeight="bold" fill="#00b900">LINE</text>
        </Svg>
      </Task>
      <Task run active>
        <Svg w={22} h={21}>
          <path d="M12 2.500h9.500v16H12z" fill="#fff" stroke="#217346" /><path d="M13.500 5h7M13.500 8h7M13.500 11h7M13.500 14h7M13.500 17h7M17 3v15" stroke="#217346" />
          <path d="M0 2.500L13 0v21L0 18.500z" fill="#217346" /><path d="M3.500 7l5 7.500M8.500 7l-5 7.500" stroke="#fff" strokeWidth="1.700" />
        </Svg>
      </Task>
      <Task run><Svg w={23} h={22}><rect x=".7" y=".7" width="21.600" height="20.600" stroke="#fff" strokeWidth="1.400" /><path d="M1 19l7.500-12L13 14l3.500-4.500L22 19v2H1z" fill="#fff" /></Svg></Task>
      <div className="flex-1" />
      <div className="flex w-[244px] items-center">
        <Svg w={12} h={7}><path d="M1 6l5-5 5 5" stroke="#fff" strokeWidth="1.400" /></Svg>
        <Svg w={16} h={14} className="ml-[10px]">
          <path d="M4 0l4 2.500L4 5 0 2.500zM12 0l4 2.500L12 5 8 2.500zM4 5l4 2.500L4 10 0 7.500zM12 5l4 2.500-4 2.500-4-2.500zM8 9l4 2.500L8 14l-4-2.500z" fill="#fff" />
        </Svg>
        <Svg w={16} h={14} className="ml-2"><path d="M4 2.500h11.500v8H5M10 10.500V13M7 13.500h7M.5.500h4v4h-4zM2.500 4.500v9H5" stroke="#fff" /></Svg>
        <Svg w={17} h={14} className="ml-2">
          <path d="M.5 4.500h3l4-3.500v12l-4-3.500h-3zM9.500 5c1 1 1 3 0 4M12 3c2 2 2 6 0 8M14.500 1c3 3 3 9 0 12" stroke="#fff" />
        </Svg>
        <span className="ml-[12px] text-[11px] tracking-[-0.3px]">ไทย</span>
        <div className="flex flex-1 flex-col items-center pl-[7px] text-[12px] leading-[19px]">
          <span className="tracking-[-0.7px]">00:00</span>
          <span className="tracking-[-0.7px]">03/07/2019</span>
        </div>
        <div className="relative mr-[6px] ml-[9px] h-6 w-[34px]">
          <Svg w={18} h={18} className="ml-[8px] mt-1"><path d="M1 0h15v12H9l-3 4v-4H1z" fill="#fff" /><path d="M3.500 3h10M3.500 6h10M3.500 9h7" stroke="#020306" /></Svg>
          <span className="absolute left-[14px] top-[10px] flex h-4 w-4 items-center justify-center rounded-full border border-[#888] bg-[#333] text-[10.5px] font-medium leading-none">2</span>
        </div>
      </div>
      <div className="w-[5px] border-l border-[#555]" />
    </div>
  );
}

export default function App() {
  return (
    <div className="flex h-[768px] w-[1366px] flex-col overflow-hidden bg-[#e6e6e6] font-['Noto_Sans',sans-serif]">
      <div className="bg-[#217346]">
        <TitleBar />
        <RibbonTabs />
      </div>
      <Ribbon />
      <FormulaBar />
      <Worksheet />
      <SheetTabs />
      <StatusBar />
      <Taskbar />
    </div>
  );
}
